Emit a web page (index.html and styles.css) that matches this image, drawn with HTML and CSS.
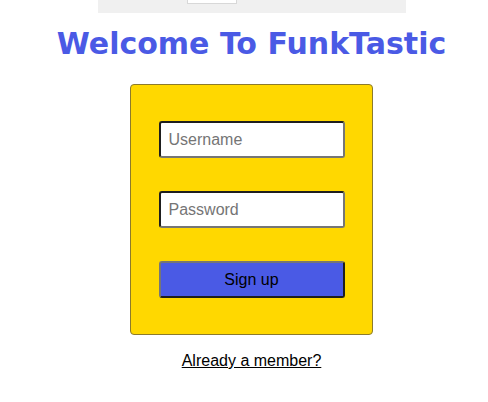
FILE: index.html
```html
<!DOCTYPE html>
<html>
<head>
<meta charset="utf-8">
<link rel="stylesheet" href="styles.css">
</head>
<body>
<div class="page">
  <div class="topbar"><div class="topbox"></div></div>
  <h1 class="title">Welcome To FunkTastic</h1>
  <form class="card">
    <input class="field" type="text" placeholder="Username">
    <input class="field" type="password" placeholder="Password">
    <button class="btn" type="button">Sign up</button>
  </form>
  <a class="link" href="#">Already a member?</a>
</div>
</body>
</html>
```
FILE: styles.css
```css
html, body {
  margin: 0;
  padding: 0;
  background: #ffffff;
}
.page {
  margin-left: 15px;
  display: flex;
  flex-direction: column;
  align-items: center;
  font-family: "Liberation Sans", Arial, sans-serif;
}
.topbar {
  width: 308px;
  height: 13px;
  background: #f0f0f0;
  position: relative;
}
.topbox {
  position: absolute;
  left: 89px;
  top: -2px;
  width: 48px;
  height: 4px;
  background: #ffffff;
  border: 1px solid #d8d8d8;
}
.title {
  margin: 13px 0 0 0;
  font-family: "DejaVu Sans", Verdana, sans-serif;
  font-weight: bold;
  font-size: 30px;
  line-height: 36px;
  color: #4a5ae5;
}
.card {
  margin-top: 22px;
  width: 243px;
  height: 251px;
  box-sizing: border-box;
  background: #ffd800;
  border: 1px solid #8c7b2c;
  border-radius: 4px;
  display: flex;
  flex-direction: column;
  align-items: center;
  padding-top: 36px;
  gap: 33px;
}
.field, .btn {
  width: 186px;
  height: 37px;
  box-sizing: border-box;
  border-radius: 3px;
  font-family: "Liberation Sans", Arial, sans-serif;
  font-size: 16px;
  margin: 0;
  flex: none;
}
.field {
  background: #ffffff;
  border: 2px solid;
  border-color: #1e1e1e #767676 #767676 #1e1e1e;
  padding: 0 8px;
  color: #000;
}
.field::placeholder {
  color: #757575;
}
.btn {
  background: #4a5ae5;
  border: 2px solid;
  border-color: #767676 #1e1e1e #1e1e1e #767676;
  color: #000000;
  padding: 0;
}
.link {
  margin-top: 17px;
  font-size: 16px;
  line-height: 18px;
  color: #000000;
  text-decoration: underline;
}
```
